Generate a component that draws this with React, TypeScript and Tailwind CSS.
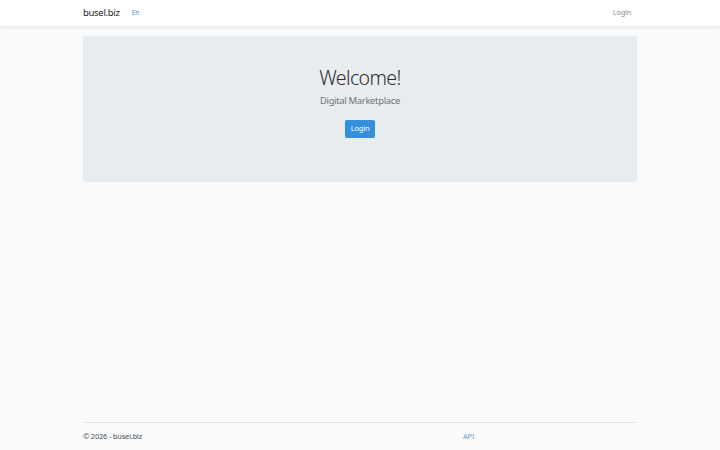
const font = { fontFamily: '"Noto Sans", "Open Sans", sans-serif' };

export default function App() {
  return (
    <div className="min-h-screen h-[450px] flex flex-col bg-[#f8fafc] text-[#212529]" style={font}>
      <nav className="h-[27px] bg-white shadow-[0_1px_3px_rgba(0,0,0,0.08)] border-b border-[#eceef0] flex">
        <div className="w-[554px] mx-auto flex items-center">
          <a className="text-[9.5px] tracking-[-0.3px] text-[#212529] leading-none">busel.biz</a>
          <a className="ml-[12px] text-[6.5px] text-[#3490dc] leading-none">En</a>
          <a className="ml-auto mr-[6px] text-[7.5px] tracking-[-0.3px] text-[#8c8c8c] leading-none">Login</a>
        </div>
      </nav>

      <main className="flex-1 pt-[9px]">
        <div className="w-[554px] mx-auto bg-[#e9ecef] rounded-[3px] h-[146px] flex flex-col items-center pt-[32px]">
          <h1 className="text-[19.5px] tracking-[-0.6px] leading-none font-light text-[#2a2e33]">Welcome!</h1>
          <p className="mt-[8px] text-[9.5px] tracking-[-0.35px] leading-none text-[#6c757d]">Digital Marketplace</p>
          <button className="mt-[15px] h-[18px] w-[30px] rounded-[2px] bg-[#3490dc] text-white text-[7.5px] tracking-[-0.2px] leading-none">
            Login
          </button>
        </div>
      </main>

      <footer className="w-[554px] mx-auto border-t border-[#e3e6e9] h-[28px] flex items-center">
        <span className="w-[380px] text-[7.5px] tracking-[-0.2px] text-[#495057]">© 2026 - busel.biz</span>
        <a className="text-[7.5px] tracking-[-0.2px] text-[#6c9cc4]">API</a>
      </footer>
    </div>
  );
}
